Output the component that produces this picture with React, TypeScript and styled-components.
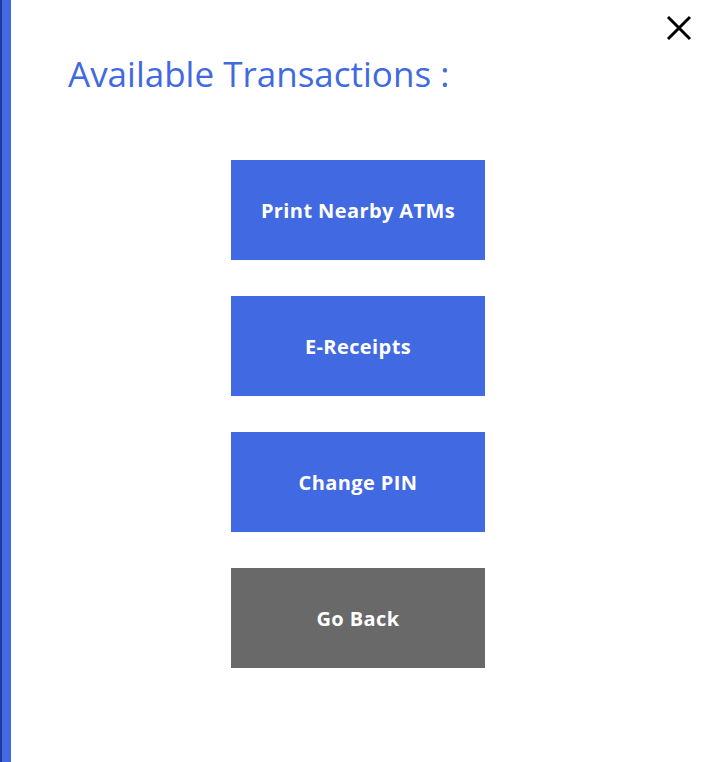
import styled, { createGlobalStyle } from "styled-components"

const GlobalStyle = createGlobalStyle`
	html, body {
		margin: 0;
		padding: 0;
		background: #ffffff;
	}
	body {
		font-family: "Open Sans", "Noto Sans", sans-serif;
	}
`

const Screen = styled.div`
	display: flex;
	width: 708px;
	height: 762px;
	background: #ffffff;
	overflow: hidden;
`

const SideBar = styled.div`
	width: 9px;
	border-left: 2px solid #1f3a9e;
	background: #4169e1;
	flex-shrink: 0;
`

const Panel = styled.div`
	flex: 1;
	display: flex;
	flex-direction: column;
	padding: 0 0 0 57px;
	position: relative;
`

const Title = styled.h1`
	margin: 51px 0 0 0;
	font-size: 35px;
	font-weight: 400;
	line-height: 46px;
	color: #4169e1;
`

const CloseButton = styled.button`
	position: absolute;
	top: 13px;
	right: 14px;
	width: 30px;
	height: 30px;
	padding: 0;
	border: none;
	background: none;
	cursor: pointer;
`

const Menu = styled.div`
	display: flex;
	flex-direction: column;
	align-items: flex-start;
	gap: 36px;
	margin: 63px 0 0 163px;
`

const Action = styled.button<{ $muted?: boolean }>`
	width: 254px;
	height: 100px;
	border: none;
	background: ${p => (p.$muted ? "#696969" : "#4169e1")};
	color: #ffffff;
	font-family: "Open Sans", "Noto Sans", sans-serif;
	font-size: 20px;
	font-weight: 700;
	letter-spacing: 0.4px;
	cursor: pointer;
`

function App() {
	const actions = ["Print Nearby ATMs", "E-Receipts", "Change PIN"]
	return (
		<Screen>
			<GlobalStyle />
			<SideBar />
			<Panel>
				<CloseButton aria-label="Close">
					<svg width="30" height="30" viewBox="0 0 30 30">
						<path d="M4 4 L26 26 M26 4 L4 26" stroke="#000" strokeWidth="3" />
					</svg>
				</CloseButton>
				<Title>Available Transactions :</Title>
				<Menu>
					{actions.map(a => (
						<Action key={a}>{a}</Action>
					))}
					<Action $muted>Go Back</Action>
				</Menu>
			</Panel>
		</Screen>
	)
}

export default App
